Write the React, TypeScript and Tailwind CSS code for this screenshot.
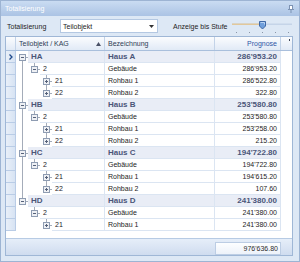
import React from "react";

type Row = {
  key: string;
  level: number;
  code: string;
  name: string;
  value: string;
  cont: boolean[];
  first: boolean;
  hasNext: boolean;
  open: boolean;
};

const GROUPS = [
  {
    code: "HA",
    name: "Haus A",
    value: "286'953.20",
    sub: "286'953.20",
    leaves: [
      ["21", "Rohbau 1", "286'522.80"],
      ["22", "Rohbau 2", "322.80"],
    ],
  },
  {
    code: "HB",
    name: "Haus B",
    value: "253'580.80",
    sub: "253'580.80",
    leaves: [
      ["21", "Rohbau 1", "253'258.00"],
      ["22", "Rohbau 2", "215.20"],
    ],
  },
  {
    code: "HC",
    name: "Haus C",
    value: "194'722.80",
    sub: "194'722.80",
    leaves: [
      ["21", "Rohbau 1", "194'615.20"],
      ["22", "Rohbau 2", "107.60"],
    ],
  },
  {
    code: "HD",
    name: "Haus D",
    value: "241'380.00",
    sub: "241'380.00",
    leaves: [["21", "Rohbau 1", "241'380.00"]],
  },
];

const ROWS: Row[] = GROUPS.flatMap((g, gi) => {
  const more = gi < GROUPS.length - 1;
  return [
    { key: g.code, level: 0, code: g.code, name: g.name, value: g.value, cont: [], first: gi === 0, hasNext: more, open: true },
    { key: g.code + "-2", level: 1, code: "2", name: "Gebäude", value: g.sub, cont: [more], first: false, hasNext: false, open: true },
    ...g.leaves.map(([c, n, v], li) => ({
      key: g.code + "-" + c,
      level: 2,
      code: c,
      name: n,
      value: v,
      cont: [more, false],
      first: false,
      hasNext: li < g.leaves.length - 1,
      open: false,
    })),
  ];
});

const LINE = "#a4acb9";

function TreeLines({ r }: { r: Row }) {
  const w = 12 * (r.level + 1);
  const cx = 12 * r.level + 6.5;
  return (
    <svg width={w} height={12} className="shrink-0">
      {r.cont.map((c, k) =>
        c ? <line key={k} x1={12 * k + 6.5} x2={12 * k + 6.5} y1={0} y2={12} stroke={LINE} /> : null
      )}
      {!r.first && <line x1={cx} x2={cx} y1={0} y2={3} stroke={LINE} />}
      {r.hasNext && <line x1={cx} x2={cx} y1={10} y2={12} stroke={LINE} />}
      <line x1={cx + 3.5} x2={12 * r.level + 12} y1={6.5} y2={6.5} stroke={LINE} />
      <rect x={cx - 3} y={3.5} width={6} height={6} fill="#eef0f4" stroke="#8e9cb2" />
      <line x1={cx - 1.5} x2={cx + 1.5} y1={6.5} y2={6.5} stroke="#56627a" />
      {!r.open && <line x1={cx} x2={cx} y1={5} y2={8} stroke="#56627a" />}
    </svg>
  );
}

function Indicator({ active }: { active?: boolean }) {
  return (
    <div className="flex h-[12px] w-[10px] shrink-0 items-center justify-center border-r border-b border-[#b9cce6] bg-gradient-to-r from-[#e9f0f9] to-[#d7e3f3]">
      {active && (
        <svg width={4} height={6}>
          <polyline points="0.5,0.5 3,3 0.5,5.5" fill="none" stroke="#1f4a8c" strokeWidth={1.3} />
        </svg>
      )}
    </div>
  );
}

function GridRow({ r, active }: { r: Row; active: boolean }) {
  const group = r.level === 0;
  const tone = group
    ? "bg-[#e9edf6] text-[#4b5679] font-bold text-[8px]"
    : "bg-white text-[#1d1d1d] text-[7px]";
  return (
    <div className="flex h-[12px]">
      <Indicator active={active} />
      <div className="flex w-[89px]">
        <TreeLines r={r} />
        <div className={`flex flex-1 items-center border-r border-b border-[#dbe5f2] pl-[3px] ${tone}`}>
          {r.code}
        </div>
      </div>
      <div className={`flex w-[110px] items-center border-r border-b border-[#dbe5f2] pl-[3px] ${tone}`}>
        {r.name}
      </div>
      <div className={`flex w-[66px] items-center justify-end border-r border-b border-[#dbe5f2] pr-[3px] ${tone}`}>
        {r.value}
      </div>
      <div className="w-[11px]" />
    </div>
  );
}

export default function App() {
  return (
    <div className="flex h-[262px] w-[300px] flex-col border border-[#9db4d3] bg-[#dde8f5] font-['Liberation_Sans',Arial,sans-serif] text-[7px] leading-none text-[#1d1d1d]">
      {/* title */}
      <div className="flex h-[15px] shrink-0 items-center justify-between bg-gradient-to-b from-[#cadcf2] to-[#abc3e4] pl-[4px] pr-[5px] text-white">
        <span>Totalisierung</span>
        <svg width={6} height={8}>
          <rect x={1.5} y={0.5} width={3} height={4} fill="#ffffff" stroke="#7d93b3" />
          <line x1={0} x2={6} y1={4.5} y2={4.5} stroke="#7d93b3" />
          <line x1={3} x2={3} y1={5} y2={8} stroke="#7d93b3" />
        </svg>
      </div>

      {/* toolbar */}
      <div className="flex h-[20px] shrink-0 items-center pl-[6px]">
        <span className="w-[53px]">Totalisierung</span>
        <div className="flex h-[14px] w-[98px] items-center justify-between border border-[#b4c8e2] bg-white pl-[2px] pr-[3px]">
          <span>Teilobjekt</span>
          <svg width={5} height={3}>
            <polygon points="0,0 5,0 2.5,3" fill="#333" />
          </svg>
        </div>
        <span className="ml-[15px] w-[59px]">Anzeige bis Stufe</span>
        <svg width={62} height={20} className="self-start">
          <rect x={0} y={7.5} width={60} height={1.5} fill="#c5d4e8" />
          <rect x={0} y={7.5} width={28} height={1.5} fill="#e2c89b" />
          {[4, 17, 30, 43, 56].map((x) => (
            <rect key={x} x={x} y={16} width={1} height={1} fill="#8a96a8" />
          ))}
          <path d="M27.5 5.5 h6 v4.5 l-3 3 l-3 -3 z" fill="#6f9fdc" stroke="#3e68a6" />
          <path d="M28.5 6.5 h4 v2" fill="none" stroke="#b9d3f3" />
        </svg>
      </div>

      {/* grid */}
      <div className="ml-[4px] flex h-[220px] w-[288px] flex-col border border-[#9fb7d6] bg-white">
        <div className="flex h-[14px] shrink-0 border-b border-[#a9bfdc] bg-gradient-to-b from-[#fbfcfe] to-[#e1eaf6] text-[#2f3c55]">
          <div className="w-[10px] border-r border-[#c3d3e8]" />
          <div className="flex w-[89px] items-center justify-between border-r border-[#c3d3e8] pl-[3px] pr-[3px]">
            <span>Teilobjekt / KAG</span>
            <svg width={5} height={4}>
              <polygon points="2.5,0 5,4 0,4" fill="#4a5166" />
            </svg>
          </div>
          <div className="flex w-[110px] items-center border-r border-[#c3d3e8] pl-[3px]">Bezeichnung</div>
          <div className="flex w-[66px] items-center justify-end border-r border-[#c3d3e8] pr-[3px] text-[#2f57a6]">
            Prognose
          </div>
          <div className="relative w-[11px]">
            <div className="absolute right-[2px] top-[2px] h-[2px] w-[1px] bg-[#3a4356]" />
          </div>
        </div>

        <div className="flex flex-1 flex-col">
          {ROWS.map((r, i) => (
            <GridRow key={r.key} r={r} active={i === 0} />
          ))}
        </div>

        <div className="flex h-[17px] shrink-0 border-t border-[#b7cbe4] bg-gradient-to-b from-[#e6eef9] to-[#cfdcef] pt-[3px] pl-[209px]">
          <div className="flex h-[13px] w-[66px] items-center justify-end border border-[#bccde4] bg-gradient-to-b from-[#fdfeff] to-[#edf2fa] pr-[2px] text-[#2b2b2b]">
            976'636.80
          </div>
        </div>
      </div>
    </div>
  );
}
